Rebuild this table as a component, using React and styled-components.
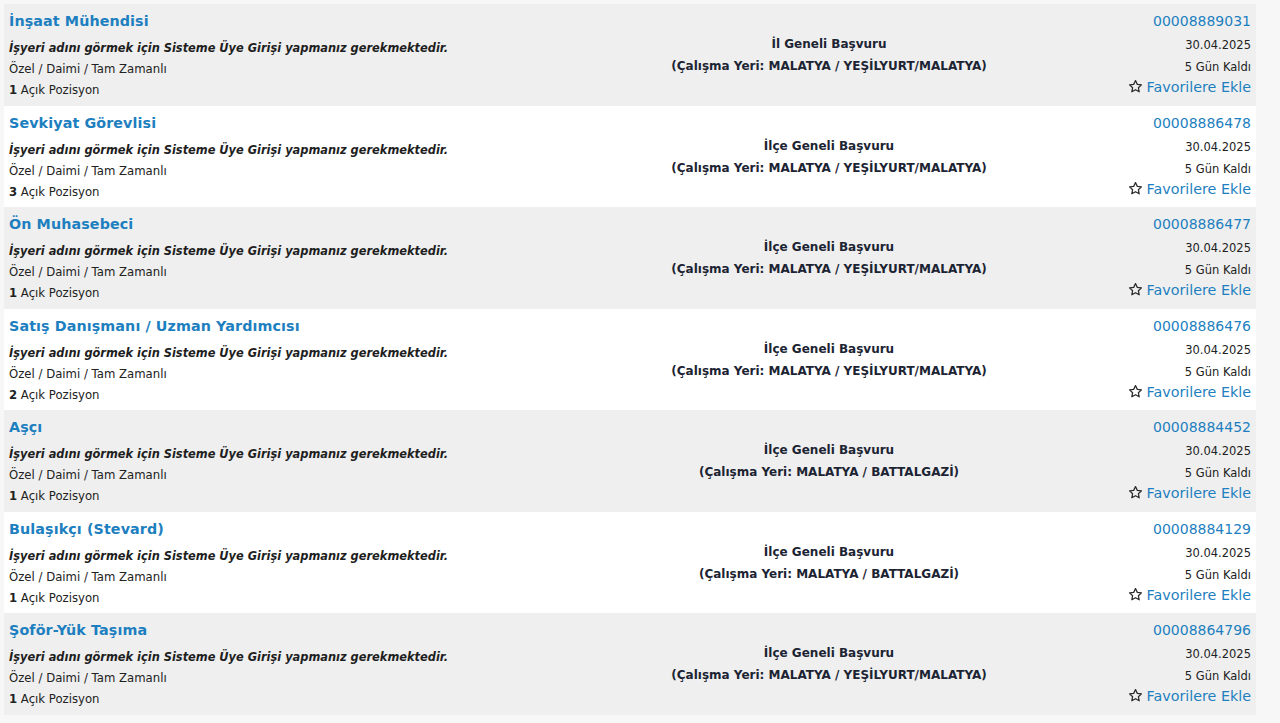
import styled, { createGlobalStyle } from 'styled-components';

const GlobalStyle = createGlobalStyle`
  html, body {
    margin: 0;
    padding: 0;
    background: #f7f7f7;
    font-family: "DejaVu Sans", Verdana, sans-serif;
  }
`

const Page = styled.div`
  padding: 4px 24px 10px 4px;
`

const List = styled.div`
  display: flex;
  flex-direction: column;
`

const Row = styled.div`
  display: grid;
  grid-template-columns: 626px 398px 1fr;
  height: 101.5px;
  box-sizing: border-box;
  background: ${p => (p.$alt ? '#ffffff' : '#efefef')};
`

const Left = styled.div`
  padding: 8px 0 0 5px;
  display: flex;
  flex-direction: column;
`

const Title = styled.a`
  font-size: 14.3px;
  font-weight: bold;
  color: #1d7fbf;
  text-decoration: none;
  line-height: 18px;
  height: 26px;
  letter-spacing: 0.1px;
`

const Notice = styled.div`
  font-size: 11.4px;
  font-weight: bold;
  font-style: italic;
  color: #1e1e1e;
  line-height: 21px;
`

const Line = styled.div`
  font-size: 11.7px;
  color: #222;
  line-height: 21px;

  b {
    font-weight: bold;
  }
`

const Middle = styled.div`
  display: flex;
  flex-direction: column;
  align-items: center;
  padding-top: 29px;
`

const MidLine = styled.div`
  font-size: 12px;
  font-weight: bold;
  color: #1c2433;
  line-height: 22px;
  white-space: nowrap;
`

const Right = styled.div`
  display: flex;
  flex-direction: column;
  align-items: flex-end;
  padding: 8px 5px 0 0;
`

const Code = styled.a`
  font-size: 14px;
  color: #1d7fbf;
  text-decoration: none;
  line-height: 18px;
  height: 22px;
`

const Meta = styled.div`
  font-size: 11.5px;
  color: #222;
  line-height: 22px;
`

const Fav = styled.a`
  display: flex;
  align-items: center;
  gap: 4px;
  font-size: 14.3px;
  color: #1d7fbf;
  text-decoration: none;
  line-height: 19px;

  svg {
    width: 15px;
    height: 15px;
    margin-top: -2px;
  }
`

const StarIcon = () => (
  <svg viewBox="0 0 24 24" fill="none" stroke="#2a2a2a" strokeWidth="2" strokeLinejoin="round">
    <path d="M12 2.5l2.9 6.1 6.6.8-4.9 4.5 1.3 6.6L12 17.2l-5.9 3.3 1.3-6.6-4.9-4.5 6.6-.8z" />
  </svg>
)

const jobs = [
  { title: 'İnşaat Mühendisi', count: 1, scope: 'İl Geneli Başvuru', place: 'MALATYA / YEŞİLYURT/MALATYA', code: '00008889031' },
  { title: 'Sevkiyat Görevlisi', count: 3, scope: 'İlçe Geneli Başvuru', place: 'MALATYA / YEŞİLYURT/MALATYA', code: '00008886478' },
  { title: 'Ön Muhasebeci', count: 1, scope: 'İlçe Geneli Başvuru', place: 'MALATYA / YEŞİLYURT/MALATYA', code: '00008886477' },
  { title: 'Satış Danışmanı / Uzman Yardımcısı', count: 2, scope: 'İlçe Geneli Başvuru', place: 'MALATYA / YEŞİLYURT/MALATYA', code: '00008886476' },
  { title: 'Aşçı', count: 1, scope: 'İlçe Geneli Başvuru', place: 'MALATYA / BATTALGAZİ', code: '00008884452' },
  { title: 'Bulaşıkçı (Stevard)', count: 1, scope: 'İlçe Geneli Başvuru', place: 'MALATYA / BATTALGAZİ', code: '00008884129' },
  { title: 'Şoför-Yük Taşıma', count: 1, scope: 'İlçe Geneli Başvuru', place: 'MALATYA / YEŞİLYURT/MALATYA', code: '00008864796' },
]

export default function App () {
  return (
    <Page>
      <GlobalStyle />
      <List>
        {jobs.map((job, i) => (
          <Row key={job.code} $alt={i % 2 === 1}>
            <Left>
              <Title href="#">{job.title}</Title>
              <Notice>İşyeri adını görmek için Sisteme Üye Girişi yapmanız gerekmektedir.</Notice>
              <Line>Özel / Daimi / Tam Zamanlı</Line>
              <Line><b>{job.count}</b> Açık Pozisyon</Line>
            </Left>
            <Middle>
              <MidLine>{job.scope}</MidLine>
              <MidLine>(Çalışma Yeri: {job.place})</MidLine>
            </Middle>
            <Right>
              <Code href="#">{job.code}</Code>
              <Meta>30.04.2025</Meta>
              <Meta>5 Gün Kaldı</Meta>
              <Fav href="#"><StarIcon />Favorilere Ekle</Fav>
            </Right>
          </Row>
        ))}
      </List>
    </Page>
  );
}
